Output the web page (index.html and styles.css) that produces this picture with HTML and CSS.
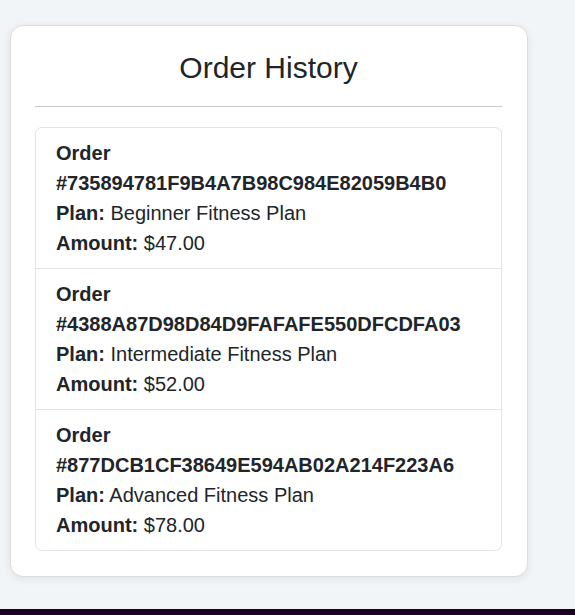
FILE: index.html
```html
<!DOCTYPE html>
<html lang="en">
<head>
<meta charset="utf-8">
<title>Order History</title>
<link rel="stylesheet" href="styles.css">
</head>
<body>
<main class="page">
  <section class="card">
    <h4 class="card-title">Order History</h4>
    <hr class="divider">
    <ul class="list-group">
      <li class="list-item">
        <div class="order-id">Order #735894781F9B4A7B98C984E82059B4B0</div>
        <div><strong>Plan:</strong> Beginner Fitness Plan</div>
        <div><strong>Amount:</strong> $47.00</div>
      </li>
      <li class="list-item">
        <div class="order-id">Order #4388A87D98D84D9FAFAFE550DFCDFA03</div>
        <div><strong>Plan:</strong> Intermediate Fitness Plan</div>
        <div><strong>Amount:</strong> $52.00</div>
      </li>
      <li class="list-item">
        <div class="order-id">Order #877DCB1CF38649E594AB02A214F223A6</div>
        <div><strong>Plan:</strong> Advanced Fitness Plan</div>
        <div><strong>Amount:</strong> $78.00</div>
      </li>
    </ul>
  </section>
</main>
<footer class="footer-bar"></footer>
</body>
</html>
```
FILE: styles.css
```css
html, body {
  margin: 0;
  padding: 0;
}
body {
  background: #f2f5f8;
  font-family: "Liberation Sans", Arial, sans-serif;
  font-size: 20px;
  line-height: 1.5;
  color: #212529;
  height: 615px;
  display: flex;
  flex-direction: column;
  overflow: hidden;
}
.page {
  flex: 1;
  padding: 25px 0 0 10px;
}
.card {
  box-sizing: border-box;
  width: 518px;
  background: #ffffff;
  border: 1px solid #dcdcdc;
  border-radius: 13px;
  box-shadow: 0 2px 8px rgba(0, 0, 0, 0.08);
  padding: 24px 25px 25px 24px;
}
.card-title {
  margin: 0 0 10px;
  font-size: 30px;
  font-weight: 400;
  line-height: 1.2;
  text-align: center;
  color: #212529;
}
.divider {
  margin: 20px 0;
  border: 0;
  border-top: 1px solid #c9c9c9;
  height: 0;
}
.list-group {
  list-style: none;
  margin: 0;
  padding: 0;
  border: 1px solid #e1e3e6;
  border-radius: 7px;
}
.list-item {
  padding: 10px 20px;
  border-top: 1px solid #e1e3e6;
}
.list-item:first-child {
  border-top: 0;
}
.order-id {
  font-weight: 700;
}
strong {
  font-weight: 700;
}
.footer-bar {
  height: 6px;
  background: #1a0023;
}
```
